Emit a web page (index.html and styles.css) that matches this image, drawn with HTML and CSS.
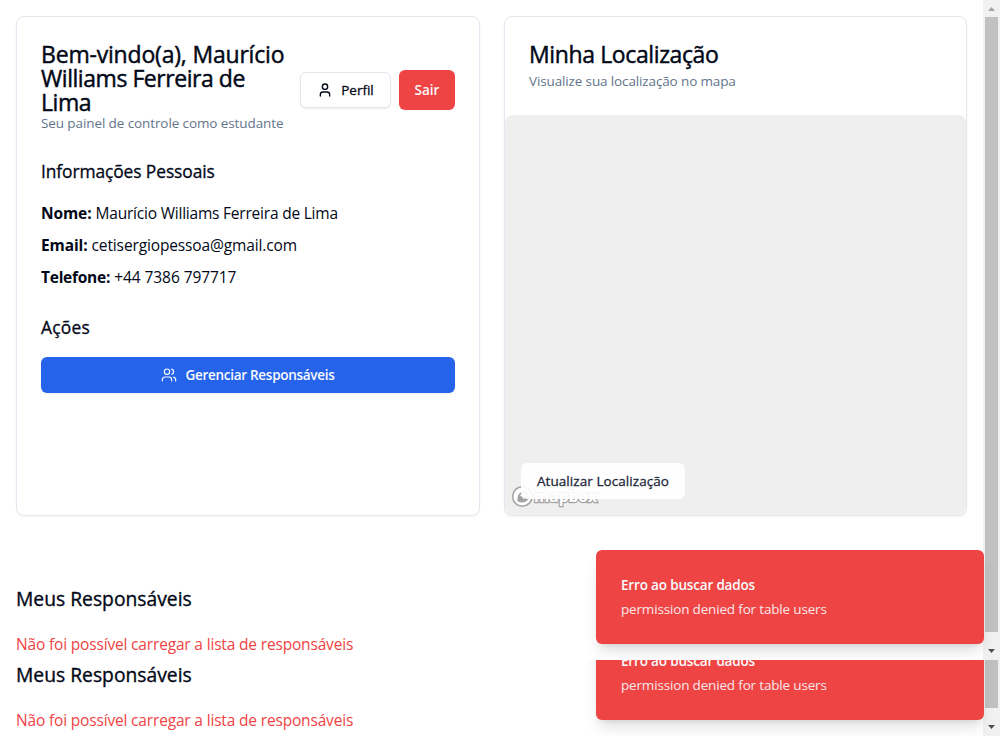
FILE: index.html
```html
<!DOCTYPE html>
<html lang="pt-BR">
<head>
<meta charset="utf-8">
<title>Painel do Estudante</title>
<link rel="stylesheet" href="styles.css">
</head>
<body>
<div class="pane pane-main">
  <main class="content">
    <div class="cards">
      <section class="card card-profile">
        <header class="profile-header">
          <div class="profile-heading">
            <h1 class="title"><span class="t-line1">Bem-vindo(a), Maurício</span><br><span class="t-line2">Williams Ferreira de</span><br><span class="t-line2">Lima</span></h1>
            <p class="subtitle sub-profile">Seu painel de controle como estudante</p>
          </div>
          <div class="actions">
            <button class="btn btn-outline">
              <svg class="icon" viewBox="0 0 24 24"><path d="M19 21v-2a4 4 0 0 0-4-4H9a4 4 0 0 0-4 4v2"/><circle cx="12" cy="7" r="4"/></svg>
              <span>Perfil</span>
            </button>
            <button class="btn btn-danger"><span>Sair</span></button>
          </div>
        </header>
        <h2 class="section-title"><span class="t-info">Informações Pessoais</span></h2>
        <div class="info">
          <p><strong>Nome:</strong> <span class="t-nomev">Maurício Williams Ferreira de Lima</span></p>
          <p><strong>Email:</strong> <span class="t-emailv">cetisergiopessoa@gmail.com</span></p>
          <p><strong class="t-tel">Telefone:</strong> <span class="t-telv">+44 7386 797717</span></p>
        </div>
        <h2 class="section-title"><span class="t-acoes">Ações</span></h2>
        <button class="btn btn-primary">
          <svg class="icon icon-thin" viewBox="0 0 24 24"><path d="M16 21v-2a4 4 0 0 0-4-4H6a4 4 0 0 0-4 4v2"/><circle cx="9" cy="7" r="4"/><path d="M22 21v-2a4 4 0 0 0-3-3.870"/><path d="M16 3.130a4 4 0 0 1 0 7.750"/></svg>
          <span class="t-ger">Gerenciar Responsáveis</span>
        </button>
      </section>
      <section class="card card-map">
        <header class="map-header">
          <h1 class="title"><span class="t-minha">Minha Localização</span></h1>
          <p class="subtitle sub-map">Visualize sua localização no mapa</p>
        </header>
        <div class="map">
          <svg class="mapbox" viewBox="0 0 88 23">
            <circle cx="11.300" cy="11.500" r="9.700" fill="#fff" stroke="#a3a3a3" stroke-width="1.500"/>
            <path d="M6.600 16.400c-.5-3 0-6.100 2.200-8.300a5.300 5.300 0 1 1 7.500 7.500c-2.600 2.500-6.700 2.100-9.700.8z" fill="#a3a3a3"/>
            <path d="M12.500 6.700l1.200 2.600 2.600 1.200-2.600 1.200-1.200 2.600-1.200-2.600-2.600-1.200 2.600-1.200z" fill="#fff"/>
            <text class="mapbox-word" x="23" y="16.500" textLength="63" lengthAdjust="spacingAndGlyphs">mapbox</text>
          </svg>
          <button class="btn btn-map"><span class="t-atual">Atualizar Localização</span></button>
        </div>
      </section>
    </div>
    <section class="guardians">
      <h2 class="guardians-title">Meus Responsáveis</h2>
      <p class="error"><span class="t-nao">Não foi possível carregar a lista de responsáveis</span></p>
    </section>
  </main>
  <div class="scrollbar">
    <svg class="arrow" viewBox="0 0 17 17"><path d="M5 11h7L8.500 7z" fill="#a3a3a3"/></svg>
    <div class="thumb thumb-main"></div>
    <svg class="arrow arrow-down" viewBox="0 0 17 17"><path d="M5 6h7L8.500 10z" fill="#505050"/></svg>
  </div>
  <div class="toast">
    <p class="toast-title"><span class="t-erro">Erro ao buscar dados</span></p>
    <p class="toast-text"><span class="t-perm">permission denied for table users</span></p>
  </div>
</div>
<div class="pane pane-tail">
  <main class="content">
    <section class="guardians">
      <h2 class="guardians-title">Meus Responsáveis</h2>
      <p class="error"><span class="t-nao">Não foi possível carregar a lista de responsáveis</span></p>
    </section>
  </main>
  <div class="scrollbar">
    <div class="thumb thumb-tail"></div>
    <svg class="arrow arrow-down" viewBox="0 0 17 17"><path d="M5 6h7L8.500 10z" fill="#505050"/></svg>
  </div>
  <div class="toast">
    <p class="toast-title"><span class="t-erro">Erro ao buscar dados</span></p>
    <p class="toast-text"><span class="t-perm">permission denied for table users</span></p>
  </div>
</div>
</body>
</html>
```

FILE: styles.css
```css
* { box-sizing: border-box; }
body, h1, h2, p { margin: 0; }
body {
  width: 1000px;
  height: 736px;
  overflow: hidden;
  background: #fff;
  color: #020817;
  font-family: "Open Sans", "Noto Sans", sans-serif;
  font-size: 15.5px;
  line-height: 24px;
}
span, strong { white-space: nowrap; }
.pane { position: relative; display: flex; overflow: hidden; }
.pane-main { height: 660px; }
.pane-tail { height: 76px; }
.content { flex: 1; min-width: 0; padding: 16px 16px 0; }
.pane-tail .content { padding-top: 0; }

.cards { display: grid; grid-template-columns: 464px 463px; gap: 24px; height: 500px; }
.card {
  border: 1px solid #e2e8f0;
  border-radius: 8px;
  background: #fff;
  box-shadow: 0 1px 2px rgba(0, 0, 0, .05);
}
.card-profile { padding: 25px 24px 24px; }
.profile-header { display: flex; align-items: center; justify-content: space-between; height: 92px; }
.profile-heading { padding-bottom: 1px; }
.title { font-size: 23px; line-height: 24px; font-weight: 500; -webkit-text-stroke: .45px currentColor; }
.subtitle { font-size: 13.5px; line-height: 20px; color: #64748b; }
.sub-profile { margin-top: -1px; letter-spacing: -.1px; }
.actions { display: flex; align-items: center; gap: 8px; padding-top: 4px; }
.btn {
  display: flex;
  align-items: center;
  justify-content: center;
  gap: 8px;
  height: 36px;
  padding: 0;
  border: 0;
  border-radius: 6px;
  font: 600 13.5px/20px "Open Sans", "Noto Sans", sans-serif;
  color: #020817;
  box-shadow: 0 1px 2px rgba(0, 0, 0, .07);
}
.icon { width: 16px; height: 16px; fill: none; stroke: currentColor; stroke-width: 2; stroke-linecap: round; stroke-linejoin: round; }
.icon-thin { stroke-width: 1.8; }
.btn-outline { width: 91px; background: #fff; border: 1px solid #e2e8f0; font-weight: 500; -webkit-text-stroke: .3px currentColor; }
.btn-danger { width: 56px; height: 40px; background: #ef4444; color: #f8fafc; box-shadow: none; }
.section-title { margin-top: 23px; font-size: 17.4px; line-height: 28px; font-weight: 500; -webkit-text-stroke: .3px currentColor; }
.info { display: grid; gap: 8px; margin-top: 16px; }
.info + .section-title { margin-top: 24px; }
strong { font-weight: 700; letter-spacing: -.1px; }
.btn-primary { width: 414px; margin-top: 16px; background: #2563eb; color: #f8fafc; }

.t-line1 { letter-spacing: -.19px; }
.t-line2 { letter-spacing: -.45px; }
.t-minha { letter-spacing: -.38px; }
.t-info { letter-spacing: -.1px; }
.t-nomev { letter-spacing: -.21px; }
.t-emailv { letter-spacing: -.13px; }
.t-tel { letter-spacing: -.25px; }
.t-telv { letter-spacing: -.07px; }
.t-acoes { letter-spacing: .25px; }
.t-ger { letter-spacing: -.28px; }
.t-atual { letter-spacing: .07px; }
.t-nao { letter-spacing: -.17px; }
.t-erro { letter-spacing: -.17px; }
.t-perm { letter-spacing: -.17px; }

.card-map { display: flex; flex-direction: column; }
.map-header { height: 98px; padding: 25px 24px 0; }
.sub-map { margin-top: 5px; letter-spacing: -.13px; }
.map { position: relative; flex: 1; border-radius: 8px; background: #efefef; }
.mapbox { position: absolute; left: 6px; bottom: 7px; width: 88px; height: 23px; }
.mapbox-word { font: 700 16px "Open Sans", sans-serif; fill: #fff; stroke: #a3a3a3; stroke-width: 2.4px; paint-order: stroke; }
.btn-map { position: absolute; left: 16px; bottom: 16px; width: 164px; background: rgba(255, 255, 255, .9); color: #1e293b; font-weight: 500; -webkit-text-stroke: .3px currentColor; box-shadow: none; }

.guardians { padding-top: 69px; }
.pane-tail .guardians { padding-top: 1px; }
.guardians-title { font-size: 19.3px; line-height: 28px; font-weight: 500; -webkit-text-stroke: .35px currentColor; }
.error { margin-top: 19px; color: #ef4444; }

.scrollbar { display: flex; flex-direction: column; align-items: center; width: 17px; background: #f1f1f1; }
.arrow { width: 17px; height: 17px; flex: none; }
.arrow-down { margin-top: auto; }
.thumb { width: 13px; background: #c1c1c1; }
.thumb-main { height: 615px; }
.thumb-tail { height: 48px; }

.toast {
  position: absolute;
  right: 16px;
  bottom: 16px;
  width: 388px;
  height: 94px;
  padding: 25px;
  border-radius: 6px;
  background: #ef4444;
  color: #f8fafc;
  font-size: 13.5px;
  line-height: 20px;
  box-shadow: 0 10px 15px -3px rgba(0, 0, 0, .12), 0 4px 6px -4px rgba(0, 0, 0, .12);
}
.toast-title { font-weight: 600; }
.toast-text { margin-top: 4px; opacity: .9; }
```
